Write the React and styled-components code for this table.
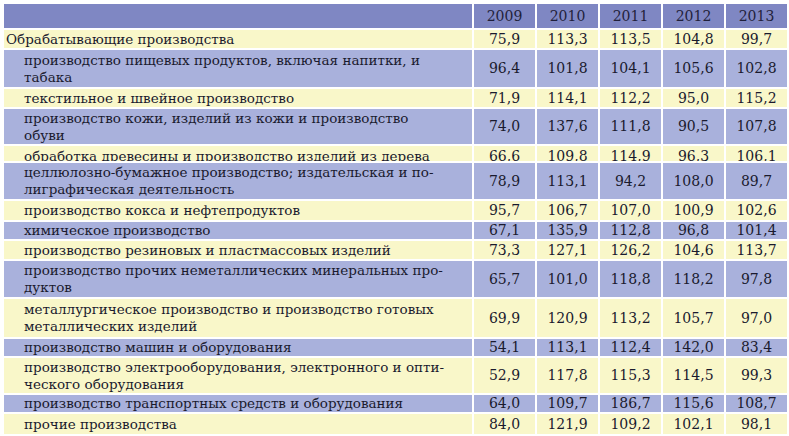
import React from "react";
import styled, { createGlobalStyle } from "styled-components";

const GlobalStyle = createGlobalStyle`
  html, body {
    margin: 0;
    padding: 0;
    background: #ffffff;
  }
  body {
    font-family: "DejaVu Serif", "Liberation Serif", serif;
    color: #1a1a2e;
  }
`;

const COLORS = {
  head: "#7f87c3",
  blue: "#a9b1dc",
  yellow: "#f9f7c9",
};

const Page = styled.div`
  padding: 4px 2px 0 4px;
  width: 789px;
  height: 436px;
  box-sizing: border-box;
  overflow: hidden;
`;

const Grid = styled.div`
  display: grid;
  grid-template-columns: 468px repeat(5, 61px);
  column-gap: 2px;
  row-gap: 2px;
`;

const Row = styled.div`
  display: contents;
`;

const Cell = styled.div`
  height: ${(p) => p.$h}px;
  background: ${(p) => COLORS[p.$bg]};
  overflow: hidden;
  display: flex;
  align-items: ${(p) => (p.$clip ? "flex-start" : "center")};
  padding-top: ${(p) => (p.$clip ? 2 : 0)}px;
  box-sizing: border-box;
  font-size: 13.5px;
  line-height: 17px;
`;

const Label = styled(Cell)`
  padding-left: ${(p) => (p.$top ? 2 : 20)}px;
  white-space: pre-line;
`;

const Num = styled(Cell)`
  justify-content: center;
  white-space: nowrap;
  font-size: 14px;
`;

const HeadCell = styled(Num)`
  color: #1f1f3a;
`;

const years = ["2009", "2010", "2011", "2012", "2013"];

const rows = [
  { label: "Обрабатывающие производства", top: true, h: 18, v: ["75,9", "113,3", "113,5", "104,8", "99,7"] },
  { label: "производство пищевых продуктов, включая напитки, и\nтабака", h: 37, v: ["96,4", "101,8", "104,1", "105,6", "102,8"] },
  { label: "текстильное и швейное производство", h: 18, v: ["71,9", "114,1", "112,2", "95,0", "115,2"] },
  { label: "производство кожи, изделий из кожи и производство\nобуви", h: 35, v: ["74,0", "137,6", "111,8", "90,5", "107,8"] },
  { label: "обработка древесины и производство изделий из дерева", h: 15, clip: true, v: ["66,6", "109,8", "114,9", "96,3", "106,1"] },
  { label: "целлюлозно-бумажное производство; издательская и по-\nлиграфическая деятельность", h: 36, v: ["78,9", "113,1", "94,2", "108,0", "89,7"] },
  { label: "производство кокса и нефтепродуктов", h: 19, v: ["95,7", "106,7", "107,0", "100,9", "102,6"] },
  { label: "химическое производство", h: 17, v: ["67,1", "135,9", "112,8", "96,8", "101,4"] },
  { label: "производство резиновых и пластмассовых изделий", h: 18, v: ["73,3", "127,1", "126,2", "104,6", "113,7"] },
  { label: "производство прочих неметаллических минеральных про-\nдуктов", h: 36, v: ["65,7", "101,0", "118,8", "118,2", "97,8"] },
  { label: "металлургическое производство и производство готовых\nметаллических изделий", h: 38, v: ["69,9", "120,9", "113,2", "105,7", "97,0"] },
  { label: "производство машин и оборудования", h: 17, v: ["54,1", "113,1", "112,4", "142,0", "83,4"] },
  { label: "производство электрооборудования, электронного и опти-\nческого оборудования", h: 35, v: ["52,9", "117,8", "115,3", "114,5", "99,3"] },
  { label: "производство транспортных средств и оборудования", h: 17, v: ["64,0", "109,7", "186,7", "115,6", "108,7"] },
  { label: "прочие производства", h: 20, v: ["84,0", "121,9", "109,2", "102,1", "98,1"] },
];

export default function App() {
  return (
    <Page>
      <GlobalStyle />
      <Grid>
        <Row>
          <Label $bg="head" $h={24} $top />
          {years.map((y) => (
            <HeadCell key={y} $bg="head" $h={24}>
              {y}
            </HeadCell>
          ))}
        </Row>
        {rows.map((r, i) => {
          const bg = i % 2 === 0 ? "yellow" : "blue";
          return (
            <Row key={i}>
              <Label $bg={bg} $h={r.h} $top={r.top} $clip={r.clip}>
                {r.label}
              </Label>
              {r.v.map((n, j) => (
                <Num key={j} $bg={bg} $h={r.h} $clip={r.clip}>
                  {n}
                </Num>
              ))}
            </Row>
          );
        })}
      </Grid>
    </Page>
  );
}
